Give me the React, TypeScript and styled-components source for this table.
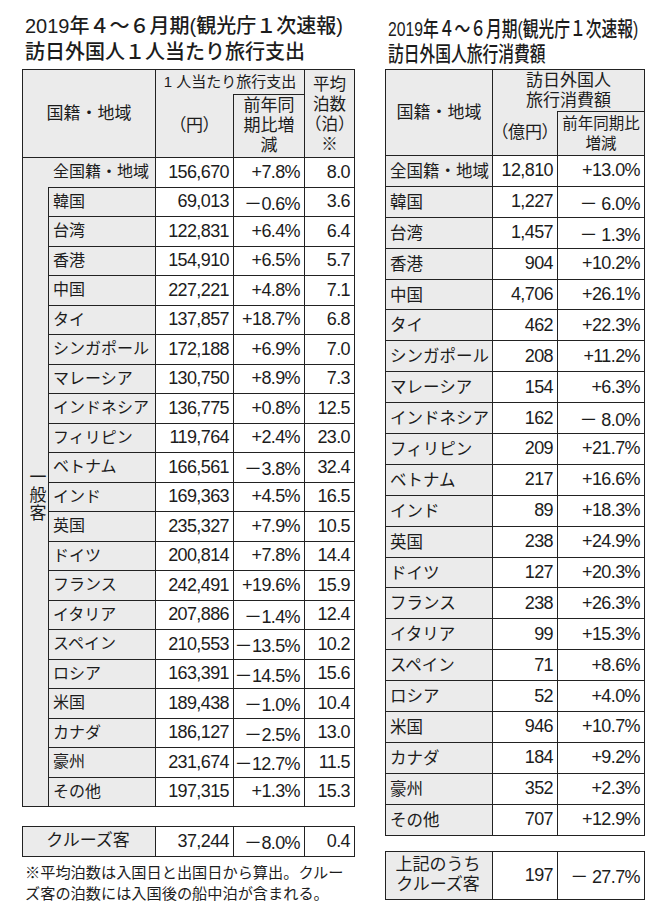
import styled, { createGlobalStyle } from "styled-components";

const GlobalStyle = createGlobalStyle`
  html, body {
    margin: 0;
    padding: 0;
    background: #ffffff;
  }
  body {
    font-family: "Liberation Sans", "Noto Sans CJK JP", sans-serif;
    color: #1c1c1c;
  }
`;

const Page = styled.div`
  display: flex;
  align-items: flex-start;
  gap: 31px;
  width: 657px;
  height: 911px;
  box-sizing: border-box;
  padding: 13px 0 0 22px;
`;

const Column = styled.div<{ $w: number }>`
  display: flex;
  flex-direction: column;
  width: ${(p) => p.$w}px;
`;

const Title = styled.h1<{ $narrow?: boolean }>`
  margin: ${(p) => (p.$narrow ? "3px 0 3px 3px" : "0 0 4px 3px")};
  font-family: "Liberation Sans", "Noto Sans CJK JP", sans-serif;
  font-weight: 500;
  font-size: ${(p) => (p.$narrow ? 21 : 20)}px;
  line-height: ${(p) => (p.$narrow ? 25 : 26)}px;
  white-space: nowrap;
  transform: ${(p) => (p.$narrow ? "scaleX(0.75)" : "none")};
  transform-origin: left top;
`;

const Table = styled.table<{ $gap?: number }>`
  border-collapse: collapse;
  table-layout: fixed;
  width: 100%;
  margin-top: ${(p) => p.$gap ?? 0}px;
`;

const Col = styled.col<{ $w: number }>`
  width: ${(p) => p.$w}px;
`;

const Row = styled.tr<{ $h: number }>`
  height: ${(p) => p.$h}px;
`;

const Head = styled.th<{
  $size?: number;
  $noTop?: boolean;
  $noBottom?: boolean;
  $tight?: boolean;
}>`
  background: #ebebeb;
  border: 1.5px solid #222;
  ${(p) => (p.$noTop ? "border-top: none;" : "")}
  ${(p) => (p.$noBottom ? "border-bottom: none;" : "")}
  font-weight: 400;
  font-size: ${(p) => p.$size ?? 17}px;
  line-height: 20px;
  text-align: center;
  vertical-align: middle;
  padding: 0;
  white-space: nowrap;
  font-feature-settings: ${(p) => (p.$tight ? '"palt"' : "normal")};
`;

const Label = styled.td<{ $size?: number; $align?: string; $noBottom?: boolean }>`
  background: #ebebeb;
  border: 1.5px solid #222;
  ${(p) => (p.$noBottom ? "border-bottom: none;" : "")}
  font-size: ${(p) => p.$size ?? 16}px;
  line-height: 20px;
  text-align: ${(p) => p.$align ?? "left"};
  padding: 0 6px 0 4px;
  white-space: nowrap;
  vertical-align: middle;
`;

const Group = styled.td`
  background: #ebebeb;
  border: 1.5px solid #222;
  border-top: none;
  padding: 0;
  text-align: center;
  vertical-align: middle;
`;

const GroupText = styled.span`
  display: inline-block;
  writing-mode: vertical-rl;
  font-size: 17px;
  line-height: 20px;
  letter-spacing: 1px;
`;

const Num = styled.td`
  border: 1.5px solid #222;
  background: #ffffff;
  font-size: 18px;
  letter-spacing: -0.6px;
  text-align: right;
  padding: 0 4px 0 0;
  white-space: nowrap;
  vertical-align: middle;
`;

const Note = styled.p`
  margin: 5px 0 0 3px;
  font-size: 15.2px;
  line-height: 21px;
  white-space: nowrap;
`;

type Line = [string, string, string, string?];

const spend: Line[] = [
  ["韓国", "69,013", "－0.6%", "3.6"],
  ["台湾", "122,831", "+6.4%", "6.4"],
  ["香港", "154,910", "+6.5%", "5.7"],
  ["中国", "227,221", "+4.8%", "7.1"],
  ["タイ", "137,857", "+18.7%", "6.8"],
  ["シンガポール", "172,188", "+6.9%", "7.0"],
  ["マレーシア", "130,750", "+8.9%", "7.3"],
  ["インドネシア", "136,775", "+0.8%", "12.5"],
  ["フィリピン", "119,764", "+2.4%", "23.0"],
  ["ベトナム", "166,561", "－3.8%", "32.4"],
  ["インド", "169,363", "+4.5%", "16.5"],
  ["英国", "235,327", "+7.9%", "10.5"],
  ["ドイツ", "200,814", "+7.8%", "14.4"],
  ["フランス", "242,491", "+19.6%", "15.9"],
  ["イタリア", "207,886", "－1.4%", "12.4"],
  ["スペイン", "210,553", "－13.5%", "10.2"],
  ["ロシア", "163,391", "－14.5%", "15.6"],
  ["米国", "189,438", "－1.0%", "10.4"],
  ["カナダ", "186,127", "－2.5%", "13.0"],
  ["豪州", "231,674", "－12.7%", "11.5"],
  ["その他", "197,315", "+1.3%", "15.3"],
];

const total: Line[] = [
  ["全国籍・地域", "12,810", "+13.0%"],
  ["韓国", "1,227", "－ 6.0%"],
  ["台湾", "1,457", "－ 1.3%"],
  ["香港", "904", "+10.2%"],
  ["中国", "4,706", "+26.1%"],
  ["タイ", "462", "+22.3%"],
  ["シンガポール", "208", "+11.2%"],
  ["マレーシア", "154", "+6.3%"],
  ["インドネシア", "162", "－ 8.0%"],
  ["フィリピン", "209", "+21.7%"],
  ["ベトナム", "217", "+16.6%"],
  ["インド", "89", "+18.3%"],
  ["英国", "238", "+24.9%"],
  ["ドイツ", "127", "+20.3%"],
  ["フランス", "238", "+26.3%"],
  ["イタリア", "99", "+15.3%"],
  ["スペイン", "71", "+8.6%"],
  ["ロシア", "52", "+4.0%"],
  ["米国", "946", "+10.7%"],
  ["カナダ", "184", "+9.2%"],
  ["豪州", "352", "+2.3%"],
  ["その他", "707", "+12.9%"],
];

const LEFT_ROW = 29.5;
const RIGHT_ROW = 30.9;

function LeftCols() {
  return (
    <colgroup>
      <Col $w={26} />
      <Col $w={107} />
      <Col $w={78} />
      <Col $w={71} />
      <Col $w={50} />
    </colgroup>
  );
}

function RightCols() {
  return (
    <colgroup>
      <Col $w={107} />
      <Col $w={65} />
      <Col $w={87} />
    </colgroup>
  );
}

function SpendTable() {
  return (
    <Column $w={332}>
      <Title>
        2019年４～６月期(観光庁１次速報)
        <br />
        訪日外国人１人当たり旅行支出
      </Title>
      <Table>
        <LeftCols />
        <tbody>
          <Row $h={25}>
            <Head colSpan={2} rowSpan={2}>
              国籍・地域
            </Head>
            <Head colSpan={2} $size={15} $noBottom>
              1 人当たり旅行支出
            </Head>
            <Head rowSpan={2} $size={16.5}>
              平均
              <br />
              泊数
              <br />
              （泊）
              <br />※
            </Head>
          </Row>
          <Row $h={63}>
            <Head $noTop $tight>
              （円）
            </Head>
            <Head>
              前年同
              <br />
              期比増
              <br />減
            </Head>
          </Row>
          <Row $h={LEFT_ROW}>
            <Label colSpan={2} $align="right" $noBottom>
              全国籍・地域
            </Label>
            <Num>156,670</Num>
            <Num>+7.8%</Num>
            <Num>8.0</Num>
          </Row>
          {spend.map(([name, yen, diff, nights], i) => (
            <Row $h={LEFT_ROW} key={name}>
              {i === 0 && (
                <Group rowSpan={spend.length}>
                  <GroupText>一般客</GroupText>
                </Group>
              )}
              <Label>{name}</Label>
              <Num>{yen}</Num>
              <Num>{diff}</Num>
              <Num>{nights}</Num>
            </Row>
          ))}
        </tbody>
      </Table>
      <Table $gap={19}>
        <LeftCols />
        <tbody>
          <Row $h={LEFT_ROW}>
            <Label colSpan={2} $align="center" $size={17}>
              クルーズ客
            </Label>
            <Num>37,244</Num>
            <Num>－8.0%</Num>
            <Num>0.4</Num>
          </Row>
        </tbody>
      </Table>
      <Note>
        ※平均泊数は入国日と出国日から算出。クルー
        <br />
        ズ客の泊数には入国後の船中泊が含まれる。
      </Note>
    </Column>
  );
}

function TotalTable() {
  return (
    <Column $w={260}>
      <Title $narrow>
        2019年４～６月期(観光庁１次速報)
        <br />
        訪日外国人旅行消費額
      </Title>
      <Table>
        <RightCols />
        <tbody>
          <Row $h={42}>
            <Head rowSpan={2}>国籍・地域</Head>
            <Head colSpan={2} $noBottom>
              訪日外国人
              <br />
              旅行消費額
            </Head>
          </Row>
          <Row $h={44}>
            <Head $noTop $tight>
              （億円）
            </Head>
            <Head $size={15.5}>
              前年同期比
              <br />
              増減
            </Head>
          </Row>
          {total.map(([name, amount, diff]) => (
            <Row $h={RIGHT_ROW} key={name}>
              <Label $size={16.5}>{name}</Label>
              <Num>{amount}</Num>
              <Num>{diff}</Num>
            </Row>
          ))}
        </tbody>
      </Table>
      <Table $gap={15}>
        <RightCols />
        <tbody>
          <Row $h={48}>
            <Label $align="center" $size={17}>
              上記のうち
              <br />
              クルーズ客
            </Label>
            <Num>197</Num>
            <Num>－ 27.7%</Num>
          </Row>
        </tbody>
      </Table>
    </Column>
  );
}

export default function App() {
  return (
    <>
      <GlobalStyle />
      <Page>
        <SpendTable />
        <TotalTable />
      </Page>
    </>
  );
}
